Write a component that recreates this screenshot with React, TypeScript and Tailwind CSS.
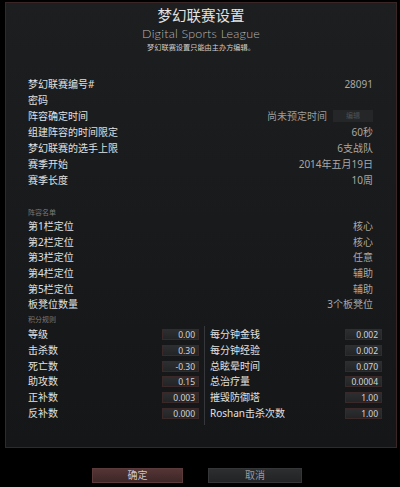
const CJK = { fontFamily: '"Noto Sans", "Noto Sans CJK SC", sans-serif' }

const info: [string, string][] = [
  ['梦幻联赛编号#', '28091'],
  ['密码', ''],
  ['阵容确定时间', ''],
  ['组建阵容的时间限定', '60秒'],
  ['梦幻联赛的选手上限', '6支战队'],
  ['赛季开始', '2014年五月19日'],
  ['赛季长度', '10周'],
]

const roster: [string, string][] = [
  ['第1栏定位', '核心'],
  ['第2栏定位', '核心'],
  ['第3栏定位', '任意'],
  ['第4栏定位', '辅助'],
  ['第5栏定位', '辅助'],
  ['板凳位数量', '3个板凳位'],
]

const scoreLeft: [string, string][] = [
  ['等级', '0.00'],
  ['击杀数', '0.30'],
  ['死亡数', '-0.30'],
  ['助攻数', '0.15'],
  ['正补数', '0.003'],
  ['反补数', '0.000'],
]

const scoreRight: [string, string][] = [
  ['每分钟金钱', '0.002'],
  ['每分钟经验', '0.002'],
  ['总眩晕时间', '0.070'],
  ['总治疗量', '0.0004'],
  ['摧毁防御塔', '1.00'],
  ['Roshan击杀次数', '1.00'],
]

function NumBox({ value }: { value: string }) {
  return (
    <div className="w-[37px] h-[11px] border border-[#3b2828] bg-gradient-to-b from-[#2c2e30] to-[#222425] text-right pr-[3px] text-[8.5px] leading-[9px] text-[#d4d4d4]">
      {value}
    </div>
  )
}

export default function App() {
  return (
    <div className="w-[400px] h-[487px] bg-black pt-[2px] pl-[5px]" style={CJK}>
      <div className="w-[392px] h-[446px] border border-[#3a2527] bg-gradient-to-b from-[#1c1e1f] to-[#151617] flex flex-col">
        {/* 标题 */}
        <div className="pt-[2px] h-[22px] leading-[20px] text-center text-[14.5px] text-[#e2e2e2]">
          梦幻联赛设置
        </div>
        <div
          className="mt-[1px] h-[16px] leading-[16px] text-center text-[12.5px] text-[#b4b4b4] font-light tracking-[0.2px]"
          style={{ fontFamily: 'Lato, "Noto Sans", sans-serif' }}
        >
          Digital Sports League
        </div>
        <div className="h-[10px] leading-[10px] text-center text-[7.2px] text-[#cfcfcf]">
          梦幻联赛设置只能由主办方编辑。
        </div>

        {/* 基本信息 */}
        <div className="mt-[24px] pl-[22px] pr-[23px]">
          {info.map(([label, value], i) => (
            <div key={label} className="h-[16px] flex items-center justify-between text-[10px]">
              <span className="text-[#e0e0e0]">{label}</span>
              {i === 2 ? (
                <div className="flex items-center gap-[6px]">
                  <span className="text-[#9c9c9c]">尚未预定时间</span>
                  <div className="w-[40px] h-[12px] bg-[#242627] text-center text-[7px] leading-[12px] text-[#505254]">
                    编辑
                  </div>
                </div>
              ) : (
                <span className="text-[#a8a8a8]">{value}</span>
              )}
            </div>
          ))}
        </div>

        {/* 阵容名单 */}
        <div className="mt-[20px] pl-[22px] h-[10px] leading-[10px] text-[7px] text-[#7a7a7a]">阵容名单</div>
        <div className="pl-[22px] pr-[23px] mt-[1px]">
          {roster.map(([label, value]) => (
            <div key={label} className="h-[15.6px] flex items-center justify-between text-[10px]">
              <span className="text-[#e0e0e0]">{label}</span>
              <span className="text-[#a8a8a8]">{value}</span>
            </div>
          ))}
        </div>

        {/* 积分规则 */}
        <div className="mt-[2px] pl-[22px] h-[10px] leading-[10px] text-[7px] text-[#7a7a7a]">积分规则</div>
        <div className="flex pl-[22px] mt-[1px]">
          <div className="w-[171px] pt-[1px]">
            {scoreLeft.map(([label, value]) => (
              <div key={label} className="h-[15.8px] flex items-center justify-between text-[10px]">
                <span className="text-[#e0e0e0]">{label}</span>
                <NumBox value={value} />
              </div>
            ))}
          </div>
          <div className="ml-[5px] w-px h-[99px] bg-[#35373a]" />
          <div className="ml-[5px] w-[172px] pt-[1px]">
            {scoreRight.map(([label, value]) => (
              <div key={label} className="h-[15.8px] flex items-center justify-between text-[10px]">
                <span className="text-[#e0e0e0]">{label}</span>
                <NumBox value={value} />
              </div>
            ))}
          </div>
        </div>
      </div>

      {/* 按钮 */}
      <div className="flex pl-[87px] pt-[20px] gap-[25px]">
        <button className="w-[91px] h-[15px] border border-[#5a3a3a] bg-gradient-to-b from-[#553535] to-[#3d2627] text-[10px] leading-[13px] text-[#cfc4c4]">
          确定
        </button>
        <button className="w-[94px] h-[15px] border border-[#343637] bg-gradient-to-b from-[#2c2e2f] to-[#222324] text-[10px] leading-[13px] text-[#9a9a9a]">
          取消
        </button>
      </div>
    </div>
  )
}
